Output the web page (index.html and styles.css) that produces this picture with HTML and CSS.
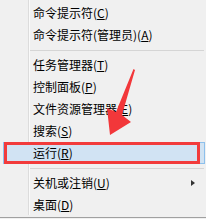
FILE: index.html
```html
<!DOCTYPE html>
<html lang="zh-CN">
<head>
    <meta charset="UTF-8">
    <title>Win+X 菜单</title>
    <link rel="stylesheet" href="styles.css">
</head>
<body>
    <div class="menu">
        <div class="item">命令提示符(<u>C</u>)</div>
        <div class="item">命令提示符(管理员)(<u>A</u>)</div>
        <div class="sep"></div>
        <div class="item">任务管理器(<u>T</u>)</div>
        <div class="item">控制面板(<u>P</u>)</div>
        <div class="item">文件资源管理器(<u>E</u>)</div>
        <div class="item">搜索(<u>S</u>)</div>
        <div class="item active">运行(<u>R</u>)</div>
        <div class="sep"></div>
        <div class="item has-sub">关机或注销(<u>U</u>)<span class="sub-arrow"></span></div>
        <div class="item">桌面(<u>D</u>)</div>

        <!-- annotation -->
        <div class="mark"></div>
        <svg class="pointer" width="206" height="219" viewBox="0 0 206 219">
            <polygon points="133.5,69 135,70 122,115 131,122 110,135 107,108 116,112" fill="#f2373a"/>
        </svg>
    </div>
</body>
</html>
```

FILE: styles.css
```css
body {
    margin: 0;
    background-color: #f0f0f0;
    font-family: "Noto Sans CJK SC", "Microsoft YaHei", sans-serif;
    font-size: 12px;
    color: #000;
}
.menu {
    position: relative;
    width: 206px;
    height: 218px;
    padding-top: 2px;
    box-sizing: border-box;
    border-bottom: 1px solid #a0a0a0;
    background: linear-gradient(to right, transparent 28px, #dcdcdc 28px, #dcdcdc 29px, #fafafa 29px, #fafafa 30px, transparent 30px) no-repeat 0 0 / 100% 215px;
    background-color: #f0f0f0;
}
.item {
    position: relative;
    height: 20px;
    line-height: 20px;
    margin: 0 1px 0 3px;
    padding-left: 29px;
    border: 1px solid transparent;
    white-space: nowrap;
}
.item u {
    text-underline-offset: 1px;
}
.item.active {
    background-color: #d1e3f3;
    border-color: #8dc0ec;
}
.sep {
    height: 4px;
    margin: 0 2px 3px 30px;
    border-bottom: 1px solid #d5d5d5;
}
.sub-arrow {
    position: absolute;
    right: 9px;
    top: 7px;
    width: 0;
    height: 0;
    border-top: 3.5px solid transparent;
    border-bottom: 3.5px solid transparent;
    border-left: 4px solid #333;
}
.mark {
    position: absolute;
    left: 4px;
    top: 142px;
    width: 190px;
    height: 16px;
    border: 3.5px solid #f23b3b;
}
.pointer {
    position: absolute;
    left: 0;
    top: 0;
}
```
